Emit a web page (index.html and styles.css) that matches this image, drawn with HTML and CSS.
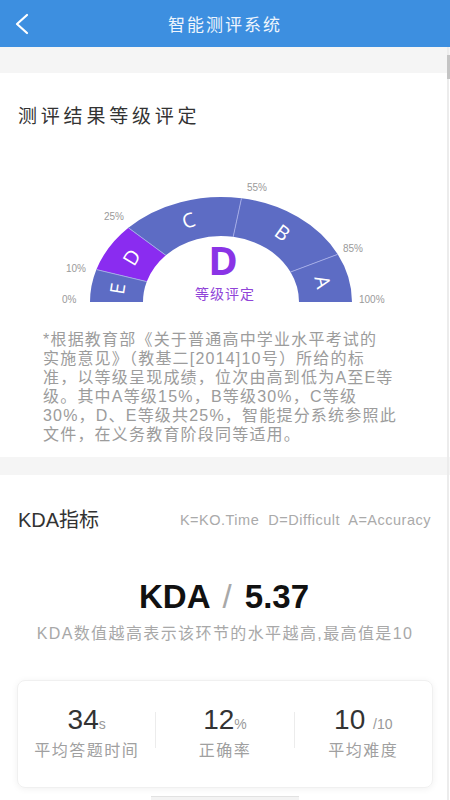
FILE: index.html
```html
<!DOCTYPE html>
<html lang="zh">
<head>
<meta charset="utf-8">
<title>智能测评系统</title>
<link rel="stylesheet" href="styles.css">
</head>
<body>
<header class="header">
  <div class="back">
    <svg width="16" height="22" viewBox="0 0 16 22"><path d="M13 2 L3 11 L13 20" fill="none" stroke="#ffffff" stroke-width="2.2" stroke-linecap="round" stroke-linejoin="round"/></svg>
  </div>
  <div class="title">智能测评系统</div>
  <div class="spacer"></div>
</header>

<div class="band band-top"></div>

<section class="panel grade">
  <h2 class="panel-title">测评结果等级评定</h2>
  <div class="gauge">
    <svg width="450" height="155" viewBox="0 0 450 155">
      <g class="seg">
        <path fill="#5d6cc4" d="M90 127 A131 105 0 0 1 96.41 94.55 L146.81 106.61 A78 66 0 0 0 143 127 Z"/>
        <path fill="#8a2cf0" d="M96.41 94.55 A131 105 0 0 1 128.37 52.75 L165.85 80.33 A78 66 0 0 0 146.81 106.61 Z"/>
        <path fill="#5d6cc4" d="M128.37 52.75 A131 105 0 0 1 241.49 23.29 L233.2 61.81 A78 66 0 0 0 165.85 80.33 Z"/>
        <path fill="#5d6cc4" d="M241.49 23.29 A131 105 0 0 1 337.72 79.33 L290.5 97.04 A78 66 0 0 0 233.2 61.81 Z"/>
        <path fill="#5d6cc4" d="M337.72 79.33 A131 105 0 0 1 352 127 L299 127 A78 66 0 0 0 290.5 97.04 Z"/>
      </g>
      <g stroke="#a3abe6" stroke-width="1">
        <line x1="96.41" y1="94.55" x2="146.81" y2="106.61"/>
        <line x1="128.37" y1="52.75" x2="165.85" y2="80.33"/>
        <line x1="241.49" y1="23.29" x2="233.2" y2="61.81"/>
        <line x1="337.72" y1="79.33" x2="290.5" y2="97.04"/>
      </g>
      <g class="seg-letter">
        <text transform="translate(117.8 113.6) rotate(-81)" dy="7">E</text>
        <text transform="translate(131.9 82.3) rotate(-58.5)" dy="7">D</text>
        <text transform="translate(188.7 45.7) rotate(-18)" dy="7">C</text>
        <text transform="translate(282.4 57.8) rotate(36)" dy="7">B</text>
        <text transform="translate(322.6 107) rotate(76.5)" dy="7">A</text>
      </g>
      <g class="pct">
        <text x="62" y="128">0%</text>
        <text x="66" y="97">10%</text>
        <text x="104" y="45">25%</text>
        <text x="247" y="16">55%</text>
        <text x="343" y="77">85%</text>
        <text x="359" y="128">100%</text>
      </g>
      <text class="big-grade" x="223" y="100">D</text>
      <text class="grade-label" x="225" y="124">等级评定</text>
    </svg>
  </div>
  <p class="note">*根据教育部《关于普通高中学业水平考试的<br>实施意见》（教基二[2014]10号）所给的标<br>准，以等级呈现成绩，位次由高到低为A至E等<br>级。其中A等级15%，B等级30%，C等级<br>30%，D、E等级共25%，智能提分系统参照此<br>文件，在义务教育阶段同等适用。</p>
</section>

<div class="band band-mid"></div>

<section class="panel kda">
  <div class="kda-head">
    <h2 class="panel-title">KDA指标</h2>
    <span class="legend">K=KO.Time&nbsp; D=Difficult&nbsp; A=Accuracy</span>
  </div>
  <div class="kda-score">KDA <span class="slash">/</span> 5.37</div>
  <p class="kda-desc">KDA数值越高表示该环节的水平越高,最高值是10</p>

  <div class="stats">
    <div class="stat">
      <div class="num">34<span class="unit">s</span></div>
      <div class="label">平均答题时间</div>
    </div>
    <div class="divider"></div>
    <div class="stat">
      <div class="num">12<span class="unit">%</span></div>
      <div class="label">正确率</div>
    </div>
    <div class="divider"></div>
    <div class="stat">
      <div class="num">10 <span class="unit">/10</span></div>
      <div class="label">平均难度</div>
    </div>
  </div>
  <div class="more"></div>
</section>

<div class="scroll-track"><div class="scroll-thumb"></div></div>
</body>
</html>
```

FILE: styles.css
```css
html, body {
  margin: 0;
  padding: 0;
}
body {
  width: 450px;
  height: 800px;
  overflow: hidden;
  background: #ffffff;
  font-family: "Liberation Sans", "Noto Sans CJK SC", sans-serif;
  color: #333;
}

.header {
  height: 47px;
  background: #3d8fe0;
  display: grid;
  grid-template-columns: 60px 1fr 60px;
  align-items: center;
}
.back {
  padding-left: 14px;
  display: flex;
  align-items: center;
}
.title {
  text-align: center;
  color: #eef5fd;
  font-size: 17px;
  letter-spacing: 2px;
}

.band {
  background: #f5f5f5;
}
.band-top { height: 26px; }
.band-mid { height: 18px; }

.panel {
  background: #fff;
}
.panel-title {
  margin: 0;
  font-weight: normal;
  font-size: 19px;
  line-height: 24px;
  color: #333;
}

.grade {
  padding: 32px 0 13px;
}
.grade .panel-title {
  padding-left: 18px;
  letter-spacing: 3.8px;
}
.gauge {
  margin-top: 46px;
  height: 155px;
}
.gauge svg {
  display: block;
}
.seg-letter text {
  fill: #ffffff;
  font-family: "Open Sans", "Liberation Sans", sans-serif;
  font-size: 20px;
  text-anchor: middle;
}
.pct text {
  fill: #9a9a9a;
  font-size: 10px;
  font-family: "Liberation Sans", sans-serif;
}
.big-grade {
  fill: #8a34e6;
  font-family: "Open Sans", "Liberation Sans", sans-serif;
  font-weight: bold;
  font-size: 40px;
  text-anchor: middle;
}
.grade-label {
  fill: #9044d8;
  font-size: 14px;
  letter-spacing: 1px;
  text-anchor: middle;
}
.note {
  margin: 0;
  padding: 0 0 0 43px;
  font-size: 16px;
  line-height: 19px;
  letter-spacing: 1.2px;
  color: #9c9c9c;
  white-space: nowrap;
}

.kda {
  padding-top: 34px;
}
.kda-head {
  display: flex;
  justify-content: space-between;
  align-items: center;
  padding: 0 19px 0 18px;
}
.kda-head .panel-title {
  font-size: 20px;
  line-height: 22px;
}
.legend {
  font-size: 14.5px;
  letter-spacing: 0.5px;
  color: #aaa;
}
.kda-score {
  margin-top: 46px;
  text-align: center;
  font-size: 33px;
  line-height: 40px;
  font-weight: bold;
  color: #111;
  padding-right: 2px;
}
.slash {
  color: #a8a8a8;
  font-weight: normal;
  margin: 0 4px;
}
.kda-desc {
  margin: 7px 0 0;
  text-align: center;
  font-size: 16px;
  line-height: 20px;
  letter-spacing: 1.4px;
  color: #a8a8a8;
}

.stats {
  margin: 36px 17px 0;
  height: 108px;
  box-sizing: border-box;
  border: 1px solid #f0f0f0;
  border-radius: 8px;
  box-shadow: 0 1px 7px rgba(0,0,0,0.06);
  display: grid;
  grid-template-columns: 1fr 1px 1fr 1px 1fr;
  align-items: start;
  padding-top: 23px;
}
.stat {
  text-align: center;
}
.divider {
  margin-top: 8px;
  height: 36px;
  background: #ececec;
}
.num {
  font-size: 28px;
  line-height: 32px;
  color: #333;
}
.unit {
  font-size: 14px;
  color: #999;
}
.label {
  font-size: 16px;
  line-height: 20px;
  letter-spacing: 1.5px;
  color: #a0a0a0;
  margin-top: 1px;
}

.more {
  margin: 8px auto 0;
  width: 148px;
  height: 10px;
  background: #f3f3f3;
  border-top: 1px solid #e2e2e2;
}

.scroll-track {
  position: fixed;
  top: 47px;
  right: 1px;
  bottom: 0;
  width: 2px;
  background: #ececec;
}
.scroll-thumb {
  margin-top: 8px;
  width: 3px;
  height: 24px;
  background: #c4c4c4;
}
```
